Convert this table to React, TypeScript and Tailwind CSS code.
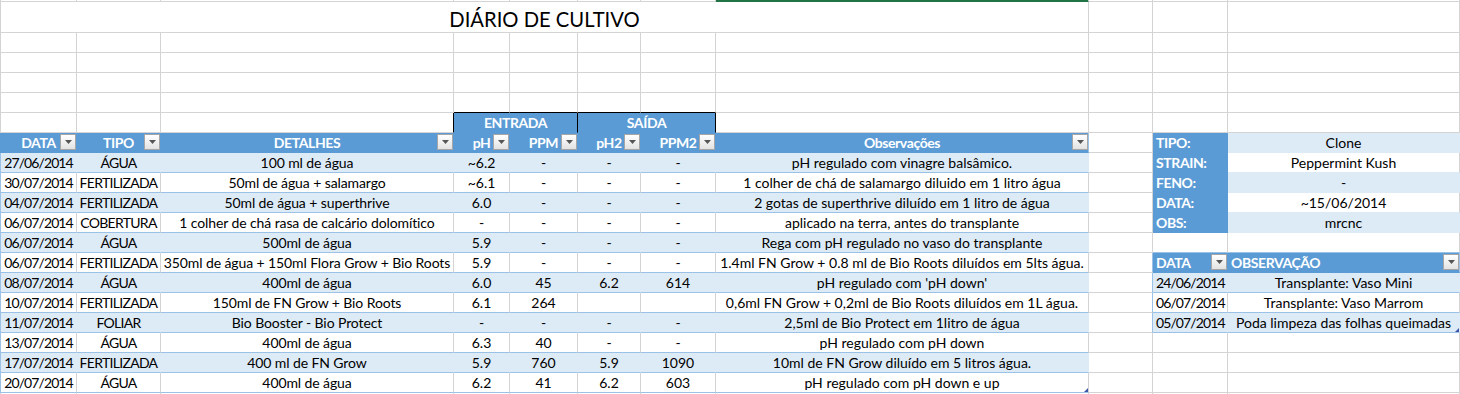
import type { ReactNode } from "react";

// column widths (each includes its 1px right gridline)
const COLS = [
  "w-[76px]",
  "w-[84px]",
  "w-[293px]",
  "w-[56px]",
  "w-[68px]",
  "w-[63px]",
  "w-[75px]",
  "w-[373px]",
];
const COL_I = "w-[64px]";
const COL_J = "w-[75px]";
const COL_K = "w-[232px]";

const GRID = "border-r-[#d4d4d4] border-b-[#d4d4d4]";
const HEAD = "bg-[#5b9bd5] text-white font-bold tracking-[-0.4px] border-r-[#5b9bd5] border-b-[#5b9bd5]";
const LIGHT = "bg-[#ddebf7] border-r-[#ddebf7] border-b-[#9bc2e6]";
const PLAIN = "bg-white border-r-[#d4d4d4] border-b-[#9bc2e6]";
const EDGE = "border-r-[#9bc2e6]";
const DATE = "tracking-[-0.9px]";
const TIPO = "tracking-[-0.7px]";

type Entry = {
  data: string;
  tipo: string;
  det: string;
  ph: string;
  ppm: string;
  ph2: string;
  ppm2: string;
  obs: string;
};

const entries: Entry[] = [
  { data: "27/06/2014", tipo: "ÁGUA", det: "100 ml de água", ph: "~6.2", ppm: "-", ph2: "-", ppm2: "-", obs: "pH regulado com vinagre balsâmico." },
  { data: "30/07/2014", tipo: "FERTILIZADA", det: "50ml de água + salamargo", ph: "~6.1", ppm: "-", ph2: "-", ppm2: "-", obs: "1 colher de chá de salamargo diluido em 1 litro água" },
  { data: "04/07/2014", tipo: "FERTILIZADA", det: "50ml de água + superthrive", ph: "6.0", ppm: "-", ph2: "-", ppm2: "-", obs: "2 gotas de superthrive diluído em 1 litro de água" },
  { data: "06/07/2014", tipo: "COBERTURA", det: "1 colher de chá rasa de calcário dolomítico", ph: "-", ppm: "-", ph2: "-", ppm2: "-", obs: "aplicado na terra, antes do transplante" },
  { data: "06/07/2014", tipo: "ÁGUA", det: "500ml de água", ph: "5.9", ppm: "-", ph2: "-", ppm2: "-", obs: "Rega com pH regulado no vaso do transplante" },
  { data: "06/07/2014", tipo: "FERTILIZADA", det: "350ml de água + 150ml Flora Grow + Bio Roots", ph: "5.9", ppm: "-", ph2: "-", ppm2: "-", obs: "1.4ml FN Grow + 0.8 ml de Bio Roots diluídos em 5lts água." },
  { data: "08/07/2014", tipo: "ÁGUA", det: "400ml de água", ph: "6.0", ppm: "45", ph2: "6.2", ppm2: "614", obs: "pH regulado com 'pH down'" },
  { data: "10/07/2014", tipo: "FERTILIZADA", det: "150ml de FN Grow + Bio Roots", ph: "6.1", ppm: "264", ph2: "", ppm2: "", obs: "0,6ml FN Grow + 0,2ml de Bio Roots diluídos em 1L água." },
  { data: "11/07/2014", tipo: "FOLIAR", det: "Bio Booster - Bio Protect", ph: "-", ppm: "-", ph2: "-", ppm2: "-", obs: "2,5ml de Bio Protect em 1litro de água" },
  { data: "13/07/2014", tipo: "ÁGUA", det: "400ml de água", ph: "6.3", ppm: "40", ph2: "-", ppm2: "-", obs: "pH regulado com pH down" },
  { data: "17/07/2014", tipo: "FERTILIZADA", det: "400 ml de FN Grow", ph: "5.9", ppm: "760", ph2: "5.9", ppm2: "1090", obs: "10ml de FN Grow diluído em 5 litros água." },
  { data: "20/07/2014", tipo: "ÁGUA", det: "400ml de água", ph: "6.2", ppm: "41", ph2: "6.2", ppm2: "603", obs: "pH regulado com pH down e up" },
];

const info = [
  { label: "TIPO:", value: "Clone" },
  { label: "STRAIN:", value: "Peppermint Kush" },
  { label: "FENO:", value: "-" },
  { label: "DATA:", value: "~15/06/2014" },
  { label: "OBS:", value: "mrcnc" },
];

const notes = [
  { data: "24/06/2014", obs: "Transplante: Vaso Mini" },
  { data: "06/07/2014", obs: "Transplante: Vaso Marrom" },
  { data: "05/07/2014", obs: "Poda limpeza das folhas queimadas" },
];

function FilterButton() {
  return (
    <span className="absolute right-0 top-px flex h-4 w-4 items-center justify-center border border-[#a6a6a6] bg-linear-to-b from-white to-[#e3e3e3]">
      <svg width="7" height="4" viewBox="0 0 7 4">
        <path d="M0 0h7L3.5 4z" fill="#555" />
      </svg>
    </span>
  );
}

function ResizeHandle() {
  return (
    <svg className="absolute bottom-0 right-0" width="4" height="4" viewBox="0 0 4 4">
      <path d="M4 0V4H0z" fill="#3f56a8" />
    </svg>
  );
}

function Cell({
  w,
  cls = "",
  children,
  filter,
  handle,
}: {
  w: string;
  cls?: string;
  children?: ReactNode;
  filter?: boolean;
  handle?: boolean;
}) {
  return (
    <div
      className={`relative flex shrink-0 items-center justify-center whitespace-nowrap border-r border-b leading-[19px] ${w} ${cls}`}
    >
      {children}
      {filter && <FilterButton />}
      {handle && <ResizeHandle />}
    </div>
  );
}

function Row({ lead = "bg-[#d4d4d4]", h = "h-[20px]", children }: { lead?: string; h?: string; children: ReactNode }) {
  return (
    <div className={`flex ${h}`}>
      <div className={`w-px shrink-0 ${lead}`} />
      {children}
    </div>
  );
}

// side panel (columns I, J, K) next to the rows of the main table
function Side({ row }: { row: number }) {
  const noteTable = row >= 6 && row <= 9;
  const iCell = <Cell w={COL_I} cls={noteTable ? "border-r-[#9bc2e6] border-b-[#d4d4d4]" : GRID} />;

  if (row < info.length) {
    const it = info[row];
    const light = row % 2 === 0;
    return (
      <>
        {iCell}
        <Cell w={COL_J} cls={`${HEAD} justify-start pl-[3px]`}>
          {it.label}
        </Cell>
        <Cell
          w={COL_K}
          cls={
            light
              ? "bg-[#ddebf7] border-r-[#ddebf7] border-b-[#ddebf7]"
              : "bg-white border-r-[#d4d4d4] border-b-[#ddebf7]"
          }
        >
          {it.value}
        </Cell>
      </>
    );
  }
  if (row === 5) {
    return (
      <>
        {iCell}
        <Cell w={COL_J} cls="border-r-[#d4d4d4] border-b-[#9bc2e6]" />
        <Cell w={COL_K} cls="border-r-[#d4d4d4] border-b-[#9bc2e6]" />
      </>
    );
  }
  if (row === 6) {
    return (
      <>
        {iCell}
        <Cell w={COL_J} cls={`${HEAD} justify-start pl-[3px]`} filter>
          DATA
        </Cell>
        <Cell w={COL_K} cls={`${HEAD} justify-start pl-[3px] border-r-[#9bc2e6]`} filter>
          OBSERVAÇÃO
        </Cell>
      </>
    );
  }
  if (row <= 9) {
    const n = notes[row - 7];
    const light = row % 2 === 1;
    return (
      <>
        {iCell}
        <Cell w={COL_J} cls={`${light ? LIGHT : PLAIN} justify-start pl-[3px] ${DATE}`}>
          {n.data}
        </Cell>
        <Cell w={COL_K} cls={`${light ? LIGHT : PLAIN} ${EDGE}`} handle={row === 9}>
          {n.obs}
        </Cell>
      </>
    );
  }
  return (
    <>
      {iCell}
      <Cell w={COL_J} cls={GRID} />
      <Cell w={COL_K} cls={GRID} />
    </>
  );
}

function EmptyRight() {
  return (
    <>
      <Cell w={COL_I} cls={GRID} />
      <Cell w={COL_J} cls={GRID} />
      <Cell w={COL_K} cls={GRID} />
    </>
  );
}

export default function App() {
  const heads = ["DATA", "TIPO", "DETALHES", "pH", "PPM", "pH2", "PPM2", "Observações"];
  const colText = [DATE, TIPO, "tracking-[-0.1px]", "", "", "", "", ""];

  return (
    <div className="h-[394px] w-[1460px] overflow-hidden bg-white font-[Lato,'Liberation_Sans',sans-serif] text-[14px] text-black">
      {/* sliver of the row above + selected column marker */}
      <Row h="h-[2px]">
        {COLS.map((w, i) => (
          <Cell
            key={i}
            w={w}
            cls={i === 7 ? "bg-[#217346] border-r-[#d4d4d4] border-b-[#217346]" : GRID}
          />
        ))}
        <EmptyRight />
      </Row>

      {/* title */}
      <Row h="h-[31px]">
        <div className="flex w-[1088px] shrink-0 items-end justify-center border-r border-b border-[#d4d4d4] pb-[1px] text-[20.2px] leading-[24px]">
          DIÁRIO DE CULTIVO
        </div>
        <EmptyRight />
      </Row>

      {[0, 1, 2, 3].map((r) => (
        <Row key={r}>
          {COLS.map((w, i) => (
            <Cell
              key={i}
              w={w}
              cls={r === 3 && i >= 3 && i <= 6 ? "border-r-[#d4d4d4] border-b-black" : GRID}
            />
          ))}
          <EmptyRight />
        </Row>
      ))}

      {/* ENTRADA / SAÍDA */}
      <Row>
        <Cell w={COLS[0]} cls={GRID} />
        <Cell w={COLS[1]} cls={GRID} />
        <Cell w={COLS[2]} cls="border-r-black border-b-[#d4d4d4]" />
        <Cell w="w-[124px]" cls="bg-[#5b9bd5] font-bold tracking-[-0.4px] text-white border-r-black border-b-[#5b9bd5]">
          ENTRADA
        </Cell>
        <Cell w="w-[138px]" cls="bg-[#5b9bd5] font-bold tracking-[-0.4px] text-white border-r-black border-b-[#5b9bd5]">
          SAÍDA
        </Cell>
        <Cell w={COLS[7]} cls={GRID} />
        <EmptyRight />
      </Row>

      {/* main table header */}
      <Row lead="bg-[#5b9bd5]">
        {heads.map((t, i) => (
          <Cell key={t} w={COLS[i]} cls={`${HEAD} ${i === 7 ? EDGE : ""}`} filter>
            {t}
          </Cell>
        ))}
        <Side row={0} />
      </Row>

      {entries.map((e, r) => {
        const base = r % 2 === 0 ? LIGHT : PLAIN;
        const vals = [e.data, e.tipo, e.det, e.ph, e.ppm, e.ph2, e.ppm2, e.obs];
        return (
          <Row key={r} lead="bg-[#9bc2e6]">
            {vals.map((v, i) => (
              <Cell
                key={i}
                w={COLS[i]}
                cls={`${base} ${i === 7 ? EDGE : ""} ${colText[i]}`}
                handle={i === 7 && r === entries.length - 1}
              >
                {v}
              </Cell>
            ))}
            <Side row={r + 1} />
          </Row>
        );
      })}

      <Row h="h-[2px]">
        {COLS.map((w, i) => (
          <Cell key={i} w={w} cls={GRID} />
        ))}
        <EmptyRight />
      </Row>
    </div>
  );
}
